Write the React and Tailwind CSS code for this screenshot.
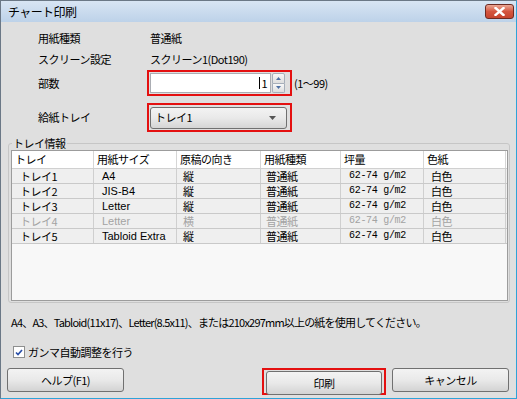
import React from 'react';

const jp = { fontFamily: '"Noto Sans CJK JP", "Noto Sans", sans-serif' };
const mono = { fontFamily: '"Liberation Mono", "DejaVu Sans Mono", monospace' };
const latin = { fontFamily: '"Liberation Sans", Arial, sans-serif' };

const rows = [
  { tray: 'トレイ1', size: 'A4', dir: '縦', type: '普通紙', weight: '62-74 g/m2', color: '白色' },
  { tray: 'トレイ2', size: 'JIS-B4', dir: '縦', type: '普通紙', weight: '62-74 g/m2', color: '白色' },
  { tray: 'トレイ3', size: 'Letter', dir: '縦', type: '普通紙', weight: '62-74 g/m2', color: '白色' },
  { tray: 'トレイ4', size: 'Letter', dir: '横', type: '普通紙', weight: '62-74 g/m2', color: '白色', disabled: true },
  { tray: 'トレイ5', size: 'Tabloid Extra', dir: '縦', type: '普通紙', weight: '62-74 g/m2', color: '白色' },
];

const cols = [
  { label: 'トレイ', w: 'w-[82px]' },
  { label: '用紙サイズ', w: 'w-[83px]' },
  { label: '原稿の向き', w: 'w-[84px]' },
  { label: '用紙種類', w: 'w-[80px]' },
  { label: '坪量', w: 'w-[83px]' },
  { label: '色紙', w: 'w-[82px]' },
];

function WinButton({ children, className = '' }) {
  return (
    <div className={`h-[24px] flex items-center justify-center rounded-[3px] border border-[#707070] bg-gradient-to-b from-[#f3f3f3] via-[#e9e9e9] to-[#d3d3d3] text-[11px] leading-none tracking-[-0.5px] text-black ${className}`}>
      {children}
    </div>
  );
}

function Cell({ w, pl, children, style }) {
  return (
    <div className={`${w} h-full flex items-center ${pl} border-r border-[#cfcfcf] overflow-hidden whitespace-pre`} style={style}>
      {children}
    </div>
  );
}

export default function App() {
  return (
    <div className="w-[517px] h-[399px] bg-white" style={jp}>
      <div className="w-[517px] h-[399px] flex flex-col border border-[#6b7886] border-r-[#2ea3d8] border-b-[#2ea3d8] bg-[#dfdfdf]">
        {/* title bar */}
        <div className="h-[21px] shrink-0 flex items-center justify-between bg-gradient-to-b from-[#d8e5f3] to-[#bdd2e9] pl-[7px] pr-[2px]">
          <span className="text-[12px] text-black leading-none tracking-[-0.6px]">チャート印刷</span>
          <div className="w-[29px] h-[15px] rounded-[3px] border border-[#6e2a22] bg-gradient-to-b from-[#eaa795] via-[#d4553f] to-[#c6442e] flex items-center justify-center">
            <svg width="11" height="9" viewBox="0 0 11 9">
              <path d="M1.5 1 L9.5 8 M9.5 1 L1.5 8" stroke="#fff" strokeWidth="2.4" strokeLinecap="square" />
            </svg>
          </div>
        </div>

        {/* body */}
        <div className="flex-1 flex flex-col pt-[6px] text-[11px] leading-none tracking-[-0.5px] text-black">
          <div className="flex flex-col pl-[37px]">
            <div className="h-[21px] flex items-center">
              <span className="w-[112px]">用紙種類</span>
              <span>普通紙</span>
            </div>
            <div className="h-[21px] flex items-center">
              <span className="w-[112px]">スクリーン設定</span>
              <span>スクリーン1(Dot190)</span>
            </div>
            <div className="h-[26px] flex items-center">
              <span className="w-[109px]">部数</span>
              <div className="w-[145px] h-[26px] border-2 border-[#e41010] flex items-center pl-px gap-px">
                <div className="w-[121px] h-[20px] bg-white border border-[#abadb3] flex items-center justify-end pr-[3px]">
                  <span className="w-px h-[12px] bg-black mr-[1px]" />
                  <span>1</span>
                </div>
                <div className="w-[13px] h-[20px] flex flex-col">
                  <div className="flex-1 border border-[#a7afba] rounded-t-[2px] bg-gradient-to-b from-[#f8f8f8] to-[#dedede] flex items-center justify-center">
                    <svg width="5" height="3" viewBox="0 0 5 3"><path d="M0 3 L2.5 0 L5 3Z" fill="#4d6fa3" /></svg>
                  </div>
                  <div className="flex-1 border border-t-0 border-[#a7afba] rounded-b-[2px] bg-gradient-to-b from-[#f8f8f8] to-[#dedede] flex items-center justify-center">
                    <svg width="5" height="3" viewBox="0 0 5 3"><path d="M0 0 L2.5 3 L5 0Z" fill="#4d6fa3" /></svg>
                  </div>
                </div>
              </div>
              <span className="ml-[2px]">(1〜99)</span>
            </div>
            <div className="mt-[7px] h-[29px] flex items-center">
              <span className="w-[109px]">給紙トレイ</span>
              <div className="w-[145px] h-[29px] border-2 border-[#e41010] flex items-center pl-px">
                <div className="w-[137px] h-[22px] rounded-[3px] border border-[#707070] bg-gradient-to-b from-[#f3f3f3] via-[#e9e9e9] to-[#d5d5d5] flex items-center justify-between pl-[4px] pr-[10px]">
                  <span>トレイ1</span>
                  <svg width="7" height="4" viewBox="0 0 7 4"><path d="M0 0 L7 0 L3.5 4Z" fill="#555" /></svg>
                </div>
              </div>
            </div>
          </div>

          {/* group box */}
          <div className="relative ml-[7px] mt-[11px] w-[502px] h-[160px] border border-[#c6c6c6] rounded-[3px] pl-[2px] pt-[6px]">
            <span className="absolute left-[3px] -top-[7px] bg-[#dfdfdf] px-px leading-[13px]">トレイ情報</span>
            <div className="w-[497px] h-[151px] bg-[#f8f8f8] border border-[#9c9c9c] flex flex-col">
              <div className="flex h-[18px] bg-white border-b border-[#d0d0d0]">
                {cols.map((c, i) => (
                  <div key={i} className={`${c.w} h-full flex items-center pl-[3px] border-r border-[#d6d6d6]`}>{c.label}</div>
                ))}
              </div>
              {rows.map((r, i) => (
                <div key={i} className={`flex h-[15px] bg-[#efefef] border-b border-[#c9c9c9] ${r.disabled ? 'text-[#a3a3a3]' : 'text-black'}`}>
                  <Cell w="w-[82px]" pl="pl-[8px]">{r.tray}</Cell>
                  <Cell w="w-[83px]" pl="pl-[8px]" style={{ ...latin, fontSize: '11px', letterSpacing: '0px' }}>{r.size}</Cell>
                  <Cell w="w-[84px]" pl="pl-[6px]">{r.dir}</Cell>
                  <Cell w="w-[80px]" pl="pl-[5px]">{r.type}</Cell>
                  <Cell w="w-[83px]" pl="pl-[8px]" style={{ ...mono, fontSize: '10px', letterSpacing: '-0.3px' }}>{r.weight}</Cell>
                  <Cell w="w-[82px]" pl="pl-[7px]">{r.color}</Cell>
                </div>
              ))}
            </div>
          </div>

          <div className="ml-[10px] mt-[11px] h-[16px] flex items-center tracking-[-0.8px]">
            A4、A3、Tabloid(11x17)、Letter(8.5x11)、または210x297mm以上の紙を使用してください。
          </div>

          <div className="ml-[12px] mt-[14px] h-[16px] flex items-center gap-[3px]">
            <div className="w-[12px] h-[12px] border border-[#8e8f8f] bg-white flex items-center justify-center">
              <svg width="8" height="7" viewBox="0 0 8 7"><path d="M1 3.5 L3 5.5 L7 1" stroke="#2a4fa8" strokeWidth="1.7" fill="none" /></svg>
            </div>
            <span>ガンマ自動調整を行う</span>
          </div>

          <div className="mt-[8px] flex items-start">
            <WinButton className="w-[117px] ml-[6px]">ヘルプ(F1)</WinButton>
            <div className="ml-[138px] w-[124px] h-[27px] border-2 border-[#e41010] flex justify-center pt-px">
              <WinButton className="w-[116px] h-[21px]">印刷</WinButton>
            </div>
            <WinButton className="w-[117px] ml-[6px]">キャンセル</WinButton>
          </div>
        </div>
      </div>
    </div>
  );
}
